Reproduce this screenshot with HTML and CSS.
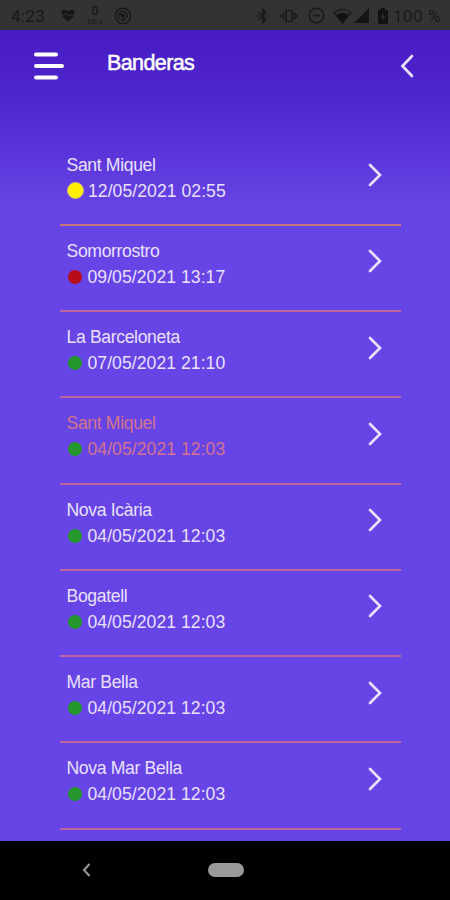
FILE: index.html
```html
<!DOCTYPE html>
<html lang="ca">
<head>
	<meta charset="UTF-8">
	<meta name="viewport" content="width=device-width, initial-scale=1">

	<title>Banderas</title>

	<link rel="stylesheet" href="styles.css">
</head>
<body>

	<div class="status-bar">
		<span class="clock">4:23</span>
		<svg class="heart" width="14" height="13" viewBox="0 0 14 13">
			<path d="M7 12.5C2 8.5.5 6.500.5 4 .5 1 4.500-.5 7 2.500 9.500-.5 13.500 1 13.500 4c0 2.500-1.500 4.500-6.500 8.500z" fill="#151515"/>
			<path d="M1 6h3l1.500-2 2 3.500L9 6h4" fill="none" stroke="#333" stroke-width="1"/>
		</svg>
		<span class="net-speed"><b>0</b><small>KB/s</small></span>
		<svg class="ring" width="18" height="18" viewBox="0 0 18 18" fill="none" stroke="#181818">
			<circle cx="9" cy="9" r="7.700" stroke-width="1.500"/>
			<path d="M6.500 12.800A4.500 4.500 0 0 1 9 4.500a4.500 4.500 0 0 1 4 6.500M7 13l5 .2" stroke-width="1.300"/>
			<path d="M6 7l5 4.500M8 7.500l3 .5" stroke-width="2"/>
		</svg>

		<div class="status-icons">
			<svg class="bluetooth" width="14" height="16" viewBox="0 0 14 16" fill="none" stroke="#181818" stroke-width="1.500">
				<path d="M3 4.500l7 7L7 14.500v-13l3 3-7 7"/>
				<path d="M.5 8h2M11.500 8h2"/>
			</svg>
			<svg class="vibrate" width="18" height="16" viewBox="0 0 18 16" fill="none" stroke="#181818" stroke-width="1.600">
				<rect x="5.800" y="2.500" width="6.400" height="11" rx="1"/>
				<path d="M3.300 4.500v7M14.700 4.500v7M1 6.500v3M17 6.500v3"/>
			</svg>
			<svg class="dnd" width="17" height="17" viewBox="0 0 17 17" fill="none" stroke="#181818" stroke-width="1.500">
				<circle cx="8.500" cy="8.500" r="7.300"/>
				<path d="M5 8.500h7"/>
			</svg>
			<svg class="wifi" width="19" height="16" viewBox="0 0 19 16">
				<path d="M1 4.800c5-4.400 12-4.400 17 0L9.500 15z" fill="none" stroke="#181818" stroke-width="1.200"/>
				<path d="M3.500 7c3.500-2.600 8.500-2.600 12 0l-6 8z" fill="#121212"/>
			</svg>
			<svg class="signal" width="15" height="15" viewBox="0 0 15 15">
				<path d="M0 15L15 0v15z" fill="#151515"/>
			</svg>
			<svg class="battery" width="10" height="16" viewBox="0 0 10 16">
				<path d="M3 0h4v2h2q1 0 1 1v12q0 1-1 1H1q-1 0-1-1V3q0-1 1-1h2z" fill="#121212"/>
				<path d="M5.500 4.500L3 9.500h1.800V13L7.200 8.200H5.500z" fill="#333"/>
			</svg>
			<span class="percent">100 %</span>
		</div>
	</div>

	<div class="app">
		<div class="header">
			<svg class="menu" width="32" height="30" viewBox="0 0 32 30" stroke="#fff" stroke-width="4" stroke-linecap="round">
				<path d="M3 3.500h20M3 15h26M3 26.500h20"/>
			</svg>
			<h1>Banderas</h1>
			<svg class="back" width="14" height="24" viewBox="0 0 14 24">
				<path d="M12 2L2.500 12 12 22"/>
			</svg>
		</div>

		<ul class="flags">
			<li>
				<div class="beach">
					<p>Sant Miquel</p>
					<p class="date"><i class="dot yellow"></i>12/05/2021 02:55</p>
				</div>
				<svg class="arrow" width="14" height="24" viewBox="0 0 14 24"><path d="M2 2l10 10L2 22"/></svg>
			</li>
			<li>
				<div class="beach">
					<p>Somorrostro</p>
					<p class="date"><i class="dot red"></i>09/05/2021 13:17</p>
				</div>
				<svg class="arrow" width="14" height="24" viewBox="0 0 14 24"><path d="M2 2l10 10L2 22"/></svg>
			</li>
			<li>
				<div class="beach">
					<p>La Barceloneta</p>
					<p class="date"><i class="dot green"></i>07/05/2021 21:10</p>
				</div>
				<svg class="arrow" width="14" height="24" viewBox="0 0 14 24"><path d="M2 2l10 10L2 22"/></svg>
			</li>
			<li>
				<div class="beach selected">
					<p>Sant Miquel</p>
					<p class="date"><i class="dot green"></i>04/05/2021 12:03</p>
				</div>
				<svg class="arrow" width="14" height="24" viewBox="0 0 14 24"><path d="M2 2l10 10L2 22"/></svg>
			</li>
			<li>
				<div class="beach">
					<p>Nova Icària</p>
					<p class="date"><i class="dot green"></i>04/05/2021 12:03</p>
				</div>
				<svg class="arrow" width="14" height="24" viewBox="0 0 14 24"><path d="M2 2l10 10L2 22"/></svg>
			</li>
			<li>
				<div class="beach">
					<p>Bogatell</p>
					<p class="date"><i class="dot green"></i>04/05/2021 12:03</p>
				</div>
				<svg class="arrow" width="14" height="24" viewBox="0 0 14 24"><path d="M2 2l10 10L2 22"/></svg>
			</li>
			<li>
				<div class="beach">
					<p>Mar Bella</p>
					<p class="date"><i class="dot green"></i>04/05/2021 12:03</p>
				</div>
				<svg class="arrow" width="14" height="24" viewBox="0 0 14 24"><path d="M2 2l10 10L2 22"/></svg>
			</li>
			<li>
				<div class="beach">
					<p>Nova Mar Bella</p>
					<p class="date"><i class="dot green"></i>04/05/2021 12:03</p>
				</div>
				<svg class="arrow" width="14" height="24" viewBox="0 0 14 24"><path d="M2 2l10 10L2 22"/></svg>
			</li>
		</ul>
	</div>

	<div class="nav-bar">
		<svg width="9" height="14" viewBox="0 0 9 14">
			<path d="M7.500 1L2 7l5.500 6" fill="none" stroke="#999" stroke-width="2"/>
		</svg>
		<span class="home"></span>
	</div>

</body>
</html>
```
FILE: styles.css
```css
:root {
	--col-text: #e9e0ff;
	--col-bg: #6744e6;
	--col-line: #b966a1;
	--col-selected: #d1748f;
	--col-status: #181818;
}
* {
	box-sizing: border-box;
}
body {
	margin: 0;
	height: 900px;
	display: flex;
	flex-direction: column;
	overflow: hidden;
	background: #000;
	font-family: "Liberation Sans", Arial, sans-serif;
}

.status-bar {
	height: 30px;
	display: flex;
	align-items: center;
	padding: 1px 9px 0 11px;
	background: #333;
	color: var(--col-status);
	font-family: Roboto, sans-serif;
}
.clock {
	width: 50px;
	font-size: 17px;
	letter-spacing: 0.3px;
}
.net-speed {
	width: 20px;
	margin-left: 10px;
	display: flex;
	flex-direction: column;
	align-items: center;
}
.net-speed b {
	font-size: 12px;
	font-weight: 500;
	line-height: 14px;
}
.net-speed small {
	font-size: 7px;
	line-height: 9px;
}
.ring {
	margin-left: 9px;
}
.status-icons {
	margin-left: auto;
	display: flex;
	align-items: center;
}
.vibrate {
	margin-left: 10px;
}
.dnd {
	margin-left: 10px;
}
.wifi {
	margin-left: 8px;
}
.signal {
	margin-left: 2px;
}
.battery {
	margin-left: 9px;
}
.percent {
	width: 48px;
	margin-left: 5px;
	font-size: 17px;
	letter-spacing: 0.5px;
	white-space: nowrap;
}

.app {
	height: 810.500px;
	background: linear-gradient(#471bc4, #4e24cb 60px, var(--col-bg) 180px);
}
.header {
	height: 109.500px;
	display: flex;
	align-items: flex-start;
	padding: 21px 36px 0 33px;
}
.header h1 {
	margin: 0 auto 0 42px;
	color: #fff;
	font-size: 21.500px;
	font-weight: normal;
	line-height: 24px;
	letter-spacing: -0.6px;
	-webkit-text-stroke: 0.5px #fff;
}
.back,
.arrow {
	fill: none;
	stroke: var(--col-text);
	stroke-width: 2.700;
	stroke-linecap: round;
}
.back {
	margin-top: 3px;
}

.flags {
	margin: 0 49.500px 0 60px;
	padding: 0;
	list-style: none;
}
.flags li {
	height: 86.250px;
	display: flex;
	justify-content: space-between;
	align-items: flex-start;
	padding: 12px 18.500px 0 6.500px;
	border-bottom: 2px solid var(--col-line);
}
.flags li:first-child {
	border-color: #c9757f;
}
.beach {
	color: var(--col-text);
	font-size: 17.600px;
	line-height: 26px;
	letter-spacing: -0.35px;
}
.beach p {
	margin: 0;
}
.beach .date {
	display: flex;
	align-items: center;
	letter-spacing: 0.05px;
}
.beach.selected {
	color: var(--col-selected);
}
.arrow {
	margin-top: 11.500px;
}

.dot {
	width: 14px;
	height: 14px;
	margin: 0 5.500px 0 1.500px;
	border-radius: 50%;
}
.yellow {
	width: 17px;
	height: 17px;
	margin: 0 4.500px 0 0;
	background: #ffee00;
	border: 1px solid #cbb98a;
}
.red {
	background: #b80d18;
}
.green {
	background: #26962f;
}

.nav-bar {
	flex: 1;
	display: flex;
	align-items: center;
	padding-left: 82px;
}
.home {
	width: 36px;
	height: 14px;
	margin-left: 117px;
	border-radius: 7px;
	background: #999;
}
```
